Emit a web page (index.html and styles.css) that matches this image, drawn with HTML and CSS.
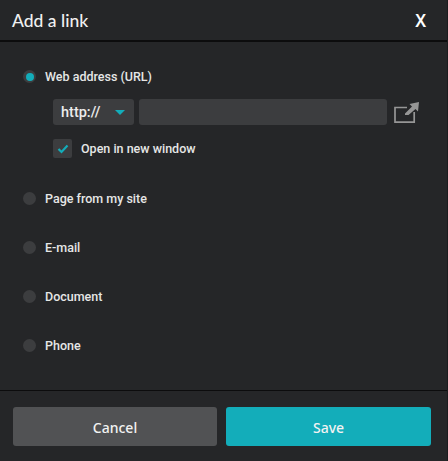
FILE: index.html
```html
<!DOCTYPE html>
<html lang="en">

<head>
    <meta charset="UTF-8">
    <meta name="viewport" content="width=device-width, initial-scale=1.0">
    <title>Add a link</title>
    <link rel="stylesheet" href="styles.css">
</head>

<body>
    <div class="dialog">
        <div class="dialog__header">
            <h2 class="dialog__title">Add a link</h2>
            <span class="dialog__close">X</span>
        </div>

        <form class="dialog__body">
            <div class="option">
                <span class="radio radio--on"></span>
                <span class="option__label">Web address (URL)</span>
            </div>

            <div class="url-row">
                <div class="select">
                    <span>http://</span>
                    <span class="select__arrow"></span>
                </div>
                <div class="url-input"></div>
                <svg class="open-icon" width="25" height="21" viewBox="0 0 25 21">
                    <path d="M13 5.5H1V20.2H20.2V10" fill="none" stroke="#969696" stroke-width="1.7"/>
                    <path d="M25 0L24 9.5L21.5 7L14.5 13H11V11.5L18 4.5L15.5 2Z" fill="#969696"/>
                </svg>
            </div>

            <div class="check-row">
                <span class="checkbox">
                    <svg width="12" height="10" viewBox="0 0 12 10">
                        <path d="M1.5 5L4.5 8L10.5 1.5" fill="none" stroke="#13adba" stroke-width="2.2"/>
                    </svg>
                </span>
                <span class="option__label">Open in new window</span>
            </div>

            <div class="option option--spaced option--first">
                <span class="radio"></span>
                <span class="option__label">Page from my site</span>
            </div>
            <div class="option option--spaced">
                <span class="radio"></span>
                <span class="option__label">E-mail</span>
            </div>
            <div class="option option--spaced">
                <span class="radio"></span>
                <span class="option__label">Document</span>
            </div>
            <div class="option option--spaced">
                <span class="radio"></span>
                <span class="option__label">Phone</span>
            </div>
        </form>

        <div class="dialog__footer">
            <button type="button" class="btn btn--cancel">Cancel</button>
            <button type="button" class="btn btn--save">Save</button>
        </div>
    </div>
</body>

</html>
```

FILE: styles.css
```css
html,
body {
    margin: 0;
    padding: 0;
    background: #1b1c1e;
}

.dialog {
    width: 447px;
    height: 461px;
    display: flex;
    flex-direction: column;
    background: #252628;
    color: #ececec;
    font-family: "Noto Sans", "Open Sans", sans-serif;
}

.dialog__header {
    height: 40px;
    flex: none;
    display: flex;
    align-items: center;
    justify-content: space-between;
    padding: 0 21px 0 12px;
    border-bottom: 2px solid #0c0c0d;
    box-sizing: content-box;
}

.dialog__title {
    margin: 0;
    font-family: "Lato", sans-serif;
    font-size: 17.5px;
    font-weight: 500;
    color: #f0f0f0;
}

.dialog__close {
    font-size: 17px;
    font-weight: 600;
    color: #fff;
}

.dialog__body {
    flex: 1;
    padding: 24px 0 0 23px;
    box-sizing: border-box;
}

.option {
    height: 21px;
    display: flex;
    align-items: center;
    gap: 9px;
}

.option--spaced {
    margin-top: 28px;
}

.option--first {
    margin-top: 30px;
}

.option__label {
    font-family: "Roboto", sans-serif;
    font-size: 12.5px;
    font-weight: 500;
    color: #e6e6e6;
}

.radio {
    width: 13px;
    height: 13px;
    flex: none;
    border-radius: 50%;
    background: #3c3d3f;
    display: flex;
    align-items: center;
    justify-content: center;
}

.radio--on::after {
    content: "";
    width: 8px;
    height: 8px;
    border-radius: 50%;
    background: #13adba;
}

.url-row {
    display: flex;
    align-items: center;
    margin: 12px 0 0 30px;
}

.select {
    width: 81px;
    height: 26px;
    flex: none;
    display: flex;
    align-items: center;
    justify-content: space-between;
    padding: 0 9px 0 8px;
    box-sizing: border-box;
    background: #3c3d3f;
    border-radius: 3px;
    font-family: "Roboto", sans-serif;
    font-size: 14.5px;
    font-weight: 500;
    color: #ececec;
}

.select__arrow {
    width: 0;
    height: 0;
    border-left: 5px solid transparent;
    border-right: 5px solid transparent;
    border-top: 5px solid #13adba;
}

.url-input {
    width: 248px;
    height: 26px;
    flex: none;
    margin-left: 5px;
    background: #3c3d3f;
    border-radius: 3px;
}

.open-icon {
    flex: none;
    margin-left: 7px;
}

.check-row {
    display: flex;
    align-items: center;
    gap: 9px;
    margin: 14px 0 0 30px;
}

.checkbox {
    width: 19px;
    height: 19px;
    flex: none;
    display: flex;
    align-items: center;
    justify-content: center;
    background: #3c3d3f;
    border-radius: 2px;
}

.dialog__footer {
    height: 71px;
    flex: none;
    display: flex;
    gap: 9px;
    padding: 16px 16px 0 13px;
    box-sizing: border-box;
    border-top: 1px solid #0c0c0d;
}

.btn {
    height: 39px;
    padding-top: 2px;
    border: none;
    border-radius: 3px;
    color: #f2f2f2;
    font-family: inherit;
    font-size: 14px;
    font-weight: 500;
}

.btn--cancel {
    width: 204px;
    background: #515254;
}

.btn--save {
    width: 205px;
    background: #13adba;
}
```
